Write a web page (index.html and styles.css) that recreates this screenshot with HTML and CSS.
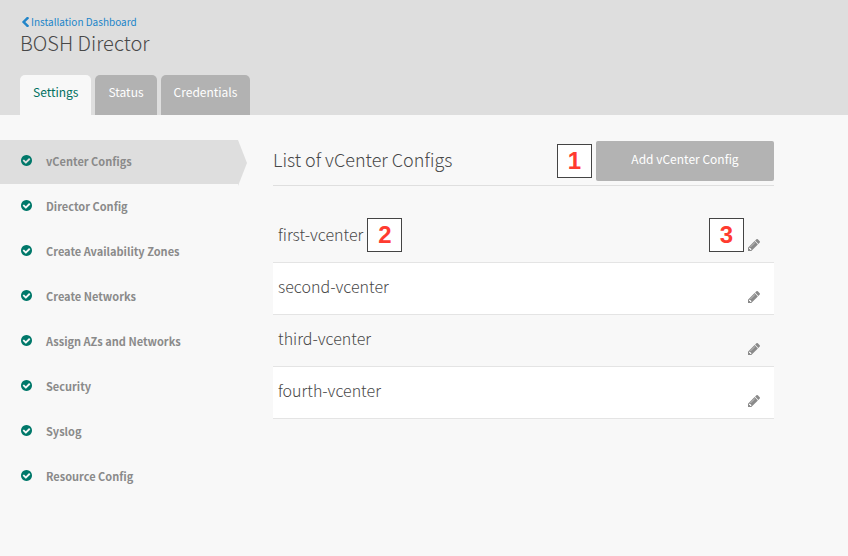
FILE: index.html
```
<!DOCTYPE html>
<html lang="en">
<head>
<meta charset="utf-8">
<meta name="viewport" content="width=device-width, initial-scale=1">
<title>BOSH Director</title>
<link rel="stylesheet" href="styles.css">
</head>
<body>
<svg class="sprite" aria-hidden="true">
  <symbol id="check" viewBox="128 128 1536 1536"><path d="M1412 734q0-28-18-46l-91-90q-19-19-45-19t-45 19l-408 407-226-226q-19-19-45-19t-45 19l-91 90q-18 18-18 46 0 27 18 45l362 362q19 19 45 19 27 0 46-19l543-543q18-18 18-45zm252 162q0 209-103 385.500t-279.500 279.500-385.500 103-385.500-103-279.500-279.500-103-385.500 103-385.500 279.500-279.500 385.500-103 385.500 103 279.500 279.500 103 385.500z"/></symbol>
  <symbol id="pencil" viewBox="128 148 1516 1516"><path d="M491 1536l91-91-235-235-91 91v107h128v128h107zm523-928q0-22-22-22-10 0-17 7l-542 542q-7 7-7 17 0 22 22 22 10 0 17-7l542-542q7-7 7-17zm-54-192l416 416-832 832h-416v-416zm683 96q0 53-37 90l-166 166-416-416 166-165q36-38 90-38 53 0 91 38l235 234q37 39 37 91z"/></symbol>
  <symbol id="chevron" viewBox="410 90 1036 1484"><path d="M1427 301l-531 531 531 531q19 19 19 45t-19 45l-166 166q-19 19-45 19t-45-19l-742-742q-19-19-19-45t19-45l742-742q19-19 45-19t45 19l166 166q19 19 19 45t-19 45z"/></symbol>
</svg>
<header class="header">
  <a class="back" href="#"><svg class="back-icon" aria-hidden="true"><use href="#chevron"/></svg>Installation Dashboard</a>
  <h1 class="title">BOSH Director</h1>
  <nav class="tabs" aria-label="Sections">
    <a class="tab tab-active" href="#" aria-current="page">Settings</a>
    <a class="tab" href="#">Status</a>
    <a class="tab" href="#">Credentials</a>
  </nav>
</header>
<div class="content">
  <nav class="sidebar" aria-label="Settings">
    <a class="side-link side-active" href="#" aria-current="page"><svg class="check" aria-hidden="true"><use href="#check"/></svg>vCenter Configs</a>
    <a class="side-link" href="#"><svg class="check" aria-hidden="true"><use href="#check"/></svg>Director Config</a>
    <a class="side-link" href="#"><svg class="check" aria-hidden="true"><use href="#check"/></svg>Create Availability Zones</a>
    <a class="side-link" href="#"><svg class="check" aria-hidden="true"><use href="#check"/></svg>Create Networks</a>
    <a class="side-link" href="#"><svg class="check" aria-hidden="true"><use href="#check"/></svg>Assign AZs and Networks</a>
    <a class="side-link" href="#"><svg class="check" aria-hidden="true"><use href="#check"/></svg>Security</a>
    <a class="side-link" href="#"><svg class="check" aria-hidden="true"><use href="#check"/></svg>Syslog</a>
    <a class="side-link" href="#"><svg class="check" aria-hidden="true"><use href="#check"/></svg>Resource Config</a>
  </nav>
  <main class="main">
    <div class="main-head">
      <h2 class="heading">List of vCenter Configs</h2>
      <span class="callout">1</span>
      <button class="add" type="button">Add vCenter Config</button>
    </div>
    <ul class="list">
      <li class="row"><span class="name">first-vcenter</span><span class="callout">2</span><span class="callout callout-end">3</span><button class="edit" type="button" aria-label="Edit first-vcenter"><svg class="pencil" aria-hidden="true"><use href="#pencil"/></svg></button></li>
      <li class="row"><span class="name">second-vcenter</span><button class="edit" type="button" aria-label="Edit second-vcenter"><svg class="pencil" aria-hidden="true"><use href="#pencil"/></svg></button></li>
      <li class="row"><span class="name">third-vcenter</span><button class="edit" type="button" aria-label="Edit third-vcenter"><svg class="pencil" aria-hidden="true"><use href="#pencil"/></svg></button></li>
      <li class="row"><span class="name">fourth-vcenter</span><button class="edit" type="button" aria-label="Edit fourth-vcenter"><svg class="pencil" aria-hidden="true"><use href="#pencil"/></svg></button></li>
    </ul>
  </main>
</div>
</body>
</html>
```
FILE: styles.css
```
* {
  box-sizing: border-box;
}

body {
  margin: 0;
  background: #f8f8f8;
  color: #484848;
  font-family: "Noto Sans CJK SC", "Open Sans", sans-serif;
  font-size: 12px;
}

a {
  text-decoration: none;
}

button {
  border: 0;
  font-family: inherit;
  cursor: pointer;
}

svg {
  flex: none;
  fill: currentColor;
}

.sprite {
  display: none;
}

.header {
  padding: 15px 20px 0;
  background: #dedede;
}

.back {
  display: flex;
  align-items: center;
  gap: 2px;
  padding-left: 2px;
  color: #2185c9;
  font-size: 10px;
  line-height: 14px;
}

.back-icon {
  width: 7px;
  height: 10px;
}

.title {
  margin: 0;
  font-size: 20px;
  font-weight: 300;
  line-height: 28px;
}

.tabs {
  display: flex;
  gap: 4px;
  padding-top: 18px;
}

.tab {
  height: 40px;
  padding: 0 13px;
  border-radius: 5px 5px 0 0;
  background: #b2b2b2;
  color: #fff;
  line-height: 34px;
}

.tab-active {
  background: #f8f8f8;
  color: #00705f;
}

.content {
  display: grid;
  grid-template-columns: 238px 1fr;
  gap: 35px;
  padding: 25px 74px 25px 0;
}

.sidebar {
  display: flex;
  flex-direction: column;
  gap: 1px;
}

.side-link {
  display: flex;
  align-items: center;
  gap: 14px;
  height: 44px;
  padding: 0 21px 3px;
  color: #8a8a8a;
  font-size: 11px;
  font-weight: 700;
}

.side-active {
  position: relative;
  background: #dedede;
}

.side-active::after {
  position: absolute;
  top: 0;
  left: 100%;
  width: 9px;
  height: 46px;
  background: #dedede;
  clip-path: polygon(0 0, 100% 50%, 0 100%);
  content: "";
}

.check {
  width: 11px;
  height: 11px;
  color: #00786a;
}

.main-head {
  display: flex;
  align-items: center;
  gap: 4px;
  height: 46px;
  padding-bottom: 3px;
  border-bottom: 1px solid #dfdfdf;
}

.heading {
  flex: 1;
  margin: 0;
  padding-bottom: 4px;
  font-size: 18px;
  font-weight: 300;
  line-height: 26px;
}

.add {
  width: 178px;
  height: 40px;
  padding: 0 0 5px;
  border-radius: 2px;
  background: #b3b3b3;
  color: #fff;
  font-size: 12px;
}

.callout {
  display: grid;
  place-items: center;
  width: 35px;
  height: 34px;
  border: 1px solid #444;
  background: #fff;
  color: #ff3b30;
  font-family: "Liberation Sans", sans-serif;
  font-size: 24px;
  font-weight: 700;
  line-height: 32px;
}

.list {
  margin: 0;
  padding: 25px 0 0;
  list-style: none;
}

.row {
  display: flex;
  align-items: center;
  height: 52px;
  padding: 0 14px 4px 5px;
  gap: 4px;
  border-bottom: 1px solid #e4e4e4;
}

.row:nth-child(even) {
  background: #fff;
}

.name {
  padding-bottom: 2px;
  font-size: 16px;
  font-weight: 300;
  line-height: 24px;
}

.callout-end {
  margin-left: auto;
}

.edit {
  align-self: flex-end;
  display: flex;
  margin-left: auto;
  padding: 0 0 7px;
  background: none;
  color: #8a8a8a;
}

.callout-end + .edit {
  margin-left: 0;
}

.pencil {
  width: 12px;
  height: 12px;
}
```
